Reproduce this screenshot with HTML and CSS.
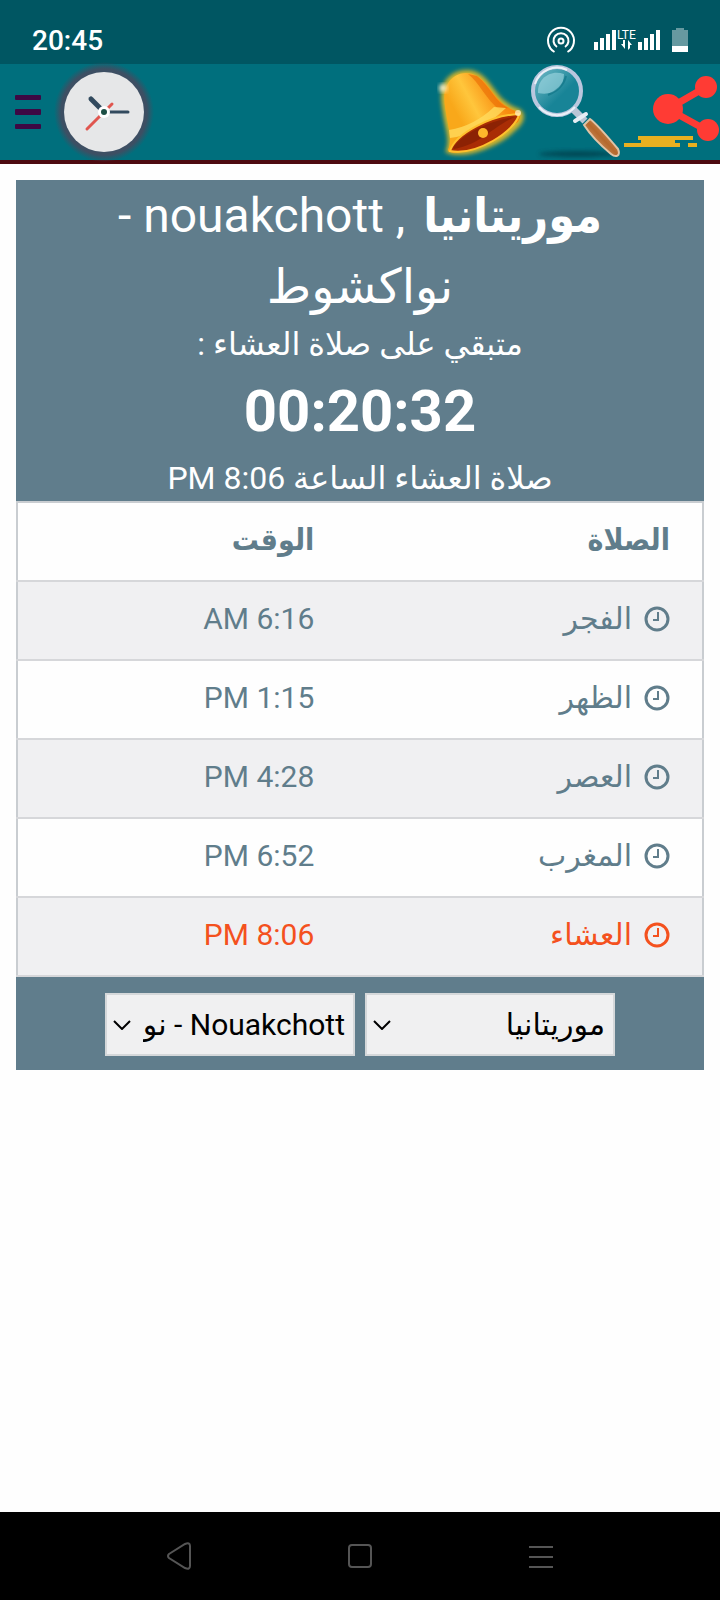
FILE: index.html
```html
<!DOCTYPE html>
<html lang="ar">
    <head>
        <meta charset="UTF-8" />
        <meta name="viewport" content="width=device-width, initial-scale=1.0" />
        <title>مواقيت الصلاة</title>
        <link rel="stylesheet" href="styles.css">
    </head>
    <body>
        <div class="status-bar">
            <span class="status-time">20:45</span>
            <svg class="status-icons" width="142" height="32" viewBox="0 0 142 32">
                <g fill="none" stroke="#fff" stroke-width="2">
                    <circle cx="15" cy="17" r="2.5" />
                    <path d="M11 23a7.5 7.5 0 1 1 8 0" />
                    <path d="M8.500 28a13 13 0 1 1 13 0" />
                </g>
                <g fill="#fff">
                    <path d="M48 18h4v8h-4zM54 14h4v12h-4zM60 10h4v16h-4zM66 6h4v20h-4z" />
                    <path d="M92 18h4v8h-4zM98 14h4v12h-4zM104 10h4v16h-4zM110 6h4v20h-4z" />
                    <path d="M79 16v9l-4-5h2v-4zM82 26v-10l4 5h-2v3z" />
                    <text class="lte" x="71" y="15">LTE</text>
                    <path d="M130 4h8v2h4v17h-16v-17h4z" opacity=".4" />
                    <path d="M126 22h16v6h-16z" />
                </g>
            </svg>
        </div>

        <header class="header">
            <button type="button" class="menu-button" aria-label="القائمة">
                <svg width="26" height="34" viewBox="0 0 26 34" fill="#3d0844">
                    <rect width="26" height="5" rx="1" />
                    <rect y="14" width="26" height="6" rx="1" />
                    <rect y="29" width="26" height="5" rx="1" />
                </svg>
            </button>
            <svg class="logo" width="96" height="96" viewBox="0 0 96 96">
                <defs>
                    <radialGradient id="ring">
                        <stop offset="0.86" stop-color="#3d4f63" />
                        <stop offset="1" stop-color="#3d4f63" stop-opacity="0" />
                    </radialGradient>
                </defs>
                <circle cx="48" cy="48" r="50" fill="url(#ring)" />
                <circle cx="48" cy="48" r="40" fill="#e6e7e8" />
                <g stroke-linecap="round">
                    <path d="M56 40 31 65" stroke="#e0564f" stroke-width="3" />
                    <path d="M35 35 46 46" stroke="#324a5e" stroke-width="5" />
                    <path d="M50 48h22" stroke="#324a5e" stroke-width="3" />
                </g>
                <circle cx="48" cy="48" r="6" fill="#fff" />
                <circle cx="48" cy="48" r="3" fill="#1d4f45" />
            </svg>

            <nav class="tools">
                <button type="button" aria-label="التنبيهات">
                    <svg width="96" height="96" viewBox="0 0 96 96">
                        <defs>
                            <linearGradient id="bell" x1=".1" y1=".4" x2=".8" y2="0">
                                <stop offset="0" stop-color="#f9a81a" />
                                <stop offset=".3" stop-color="#ffc63c" />
                                <stop offset=".7" stop-color="#f98f12" />
                                <stop offset="1" stop-color="#f07c05" />
                            </linearGradient>
                            <filter id="glow" x="-20%" y="-20%" width="140%" height="140%">
                                <feGaussianBlur stdDeviation="2" />
                            </filter>
                        </defs>
                        <path d="M16 87C20 77 16 66 14 55 12 42 9 30 14 20 20 8 36 5 46 11 61 20 63 40 87 47 92 51 90 58 83 64 69 79 36 94 16 87Z" fill="#d6b52c" stroke="#d6b52c" stroke-width="4" filter="url(#glow)" />
                        <path d="M16 86C20 76 17 66 15 55 13 42 10 31 15 21 21 9 35 6 45 12 60 21 63 41 87 48Q90 51 86 58L30 88Q17 90 16 86Z" fill="url(#bell)" />
                        <path d="M36 10C48 19 54 36 68 46L76 44C63 38 58 22 45 12Z" fill="#ea6b05" opacity=".6" />
                        <path d="M17 66Q42 62 62 43L74 44Q44 72 18 74Z" fill="#ffdb5c" opacity=".8" />
                        <path d="M18 87C24 69 60 51 87 50 84 67 44 92 18 87Z" fill="#a92d05" stroke="#ffc12e" stroke-width="2" />
                        <path d="M21 84C30 69 62 55 83 53 62 61 50 80 22 85Z" fill="#7a1b03" opacity=".6" />
                        <circle cx="51" cy="69" r="5" fill="#ffb72b" />
                        <circle cx="11" cy="24" r="4" fill="#fff4cf" opacity=".9" filter="url(#glow)" />
                        <circle cx="86" cy="49" r="3" fill="#fff4cf" opacity=".7" />
                    </svg>
                </button>
                <button type="button" aria-label="بحث">
                    <svg width="96" height="96" viewBox="0 0 96 96">
                        <defs>
                            <linearGradient id="wood" x1="0" y1="1" x2="1" y2="0">
                                <stop offset="0" stop-color="#e7c7a4" />
                                <stop offset=".5" stop-color="#b4682d" />
                                <stop offset="1" stop-color="#dcae82" />
                            </linearGradient>
                            <linearGradient id="lens" x1="0" y1="0" x2="1" y2="1">
                                <stop offset="0" stop-color="#75bcc9" />
                                <stop offset=".6" stop-color="#188497" />
                            </linearGradient>
                            <filter id="soft" x="-20%" y="-60%" width="140%" height="220%">
                                <feGaussianBlur stdDeviation="2" />
                            </filter>
                        </defs>
                        <ellipse cx="50" cy="90" rx="39" ry="3" fill="#023b47" opacity=".75" filter="url(#soft)" />
                        <path d="M46 46 57 57" stroke="#b8c6d6" stroke-width="7" />
                        <path d="M47 57 58 50" stroke="#e5edf4" stroke-width="4" stroke-linecap="round" />
                        <path d="M56 61 62 55Q69 60 90 85C93 92 88 94 83 90Q65 75 56 61Z" fill="url(#wood)" stroke="#dfc3a6" stroke-width="2" />
                        <circle cx="29" cy="27" r="23" fill="url(#lens)" />
                        <path d="M10 29C9 15 22 5 36 10 36 25 24 32 10 29Z" fill="#a5dbe4" opacity=".6" />
                        <path d="M20 31Q35 25 38 12" fill="none" stroke="#0c7183" stroke-width="2" opacity=".6" />
                        <circle cx="29" cy="27" r="24" fill="none" stroke="#bac7de" stroke-width="4" />
                        <path d="M7 20A23 23 0 0 1 39 6M11 43A24 24 0 0 0 47 43" fill="none" stroke="#eaf1f8" stroke-width="2" />
                    </svg>
                </button>
                <button type="button" aria-label="مشاركة">
                    <svg width="96" height="96" viewBox="0 0 96 96">
                        <path d="M14 72h55v4H51v3h5v4H0v-4h17v-3h-3zM64 79h9v4h-9z" fill="#e8b020" />
                        <path d="M82 23 44 45 84 67" fill="none" stroke="#ff3b34" stroke-width="7" />
                        <g fill="#ff3b34">
                            <circle cx="44" cy="45" r="15" />
                            <circle cx="82" cy="23" r="11" />
                            <circle cx="84" cy="66" r="11" />
                        </g>
                    </svg>
                </button>
            </nav>
        </header>

        <main class="content" dir="rtl">
            <section class="next-prayer">
                <h1><strong>موريتانيا</strong> , nouakchott - نواكشوط</h1>
                <p>متبقي على صلاة العشاء :</p>
                <div class="countdown">00:20:32</div>
                <p>صلاة العشاء الساعة 8:06 PM</p>
            </section>

            <table class="times">
                <thead>
                    <tr>
                        <th>الصلاة</th>
                        <th>الوقت</th>
                    </tr>
                </thead>
                <tbody>
                    <tr>
                        <td><svg class="clock" viewBox="0 0 26 26"><circle cx="13" cy="13" r="11" /><path d="M14 6v8H9" /></svg>الفجر</td>
                        <td>6:16 AM</td>
                    </tr>
                    <tr>
                        <td><svg class="clock" viewBox="0 0 26 26"><circle cx="13" cy="13" r="11" /><path d="M14 6v8H9" /></svg>الظهر</td>
                        <td>1:15 PM</td>
                    </tr>
                    <tr>
                        <td><svg class="clock" viewBox="0 0 26 26"><circle cx="13" cy="13" r="11" /><path d="M14 6v8H9" /></svg>العصر</td>
                        <td>4:28 PM</td>
                    </tr>
                    <tr>
                        <td><svg class="clock" viewBox="0 0 26 26"><circle cx="13" cy="13" r="11" /><path d="M14 6v8H9" /></svg>المغرب</td>
                        <td>6:52 PM</td>
                    </tr>
                    <tr class="active">
                        <td><svg class="clock" viewBox="0 0 26 26"><circle cx="13" cy="13" r="11" /><path d="M14 6v8H9" /></svg>العشاء</td>
                        <td>8:06 PM</td>
                    </tr>
                </tbody>
            </table>

            <form class="location">
                <div class="select-box">
                    <select name="country" aria-label="الدولة">
                        <option>موريتانيا</option>
                    </select>
                    <svg class="arrow" width="18" height="10" viewBox="0 0 18 10"><path d="M1 1l8 8 8-8" /></svg>
                </div>
                <div class="select-box">
                    <select name="city" aria-label="المدينة">
                        <option>Nouakchott - نواكشوط</option>
                    </select>
                    <svg class="arrow" width="18" height="10" viewBox="0 0 18 10"><path d="M1 1l8 8 8-8" /></svg>
                </div>
            </form>
        </main>

        <div class="system-nav">
            <button type="button" aria-label="رجوع">
                <svg width="24" height="28" viewBox="0 0 24 28"><path d="M2 12 18 2Q23 0 23 4V24Q23 28 18 26L2 16Q0 14 2 12Z" /></svg>
            </button>
            <button type="button" aria-label="الرئيسية">
                <svg width="24" height="24" viewBox="0 0 24 24"><rect x="1" y="1" width="22" height="22" rx="3" /></svg>
            </button>
            <button type="button" aria-label="التطبيقات">
                <svg width="24" height="24" viewBox="0 0 24 24"><path d="M0 3h24M0 13h24M0 23h24" /></svg>
            </button>
        </div>
    </body>
</html>
```

FILE: styles.css
```css
* {
    box-sizing: border-box;
}

body {
    display: flex;
    flex-direction: column;
    min-height: 100vh;
    margin: 0;
    font-family: Roboto, "DejaVu Sans", sans-serif;
    font-size: 30px;
    background: #fefefe;
}

button {
    display: flex;
    padding: 0;
    border: 0;
    background: none;
}

.status-bar {
    display: flex;
    justify-content: space-between;
    align-items: center;
    height: 64px;
    padding: 16px 32px 0;
    background: #005662;
    color: #fff;
}

.status-time {
    font-size: 28px;
    font-weight: 500;
}

.lte {
    font-size: 12px;
}

.header {
    display: flex;
    align-items: center;
    height: 100px;
    padding-left: 15px;
    background: #006f7d;
    border-bottom: 4px solid #4d0a10;
}

.logo {
    margin-left: 15px;
    overflow: visible;
}

.tools {
    display: flex;
    margin-left: auto;
}

.content {
    flex: 1;
    padding: 16px;
}

.next-prayer {
    background: #607d8c;
    color: #fff;
    text-align: center;
}

.next-prayer h1 {
    margin: 0;
    padding: 0 80px;
    font-size: 48px;
    font-weight: 400;
    line-height: 71px;
}

.next-prayer strong {
    margin-left: 6px;
}

.next-prayer strong,
.times th {
    font-family: "DejaVu Sans Condensed", "DejaVu Sans", sans-serif;
}

.next-prayer p {
    margin: 0;
    font-size: 32px;
    line-height: 45px;
}

.countdown {
    font-size: 58px;
    font-weight: 700;
    line-height: 89px;
}

.times {
    width: 100%;
    table-layout: fixed;
    border: 2px solid #c9cdd1;
    border-collapse: collapse;
    color: #607d8b;
}

.times th,
.times td {
    width: 48%;
    height: 79px;
    padding: 0 32px 4px;
    border-bottom: 2px solid #d6d7da;
    text-align: right;
}

.times th:first-child {
    width: 52%;
}

.times tbody tr:nth-child(odd) {
    background: #f0f0f2;
}

.times .active {
    color: #f4511e;
}

.clock {
    width: 26px;
    height: 26px;
    margin-left: 12px;
    vertical-align: -3px;
    fill: none;
    stroke: currentColor;
    stroke-width: 3;
}

.clock path {
    stroke-width: 2;
}

.location {
    display: flex;
    justify-content: center;
    gap: 10px;
    padding: 16px 16px 14px;
    background: #607d8c;
}

.select-box {
    position: relative;
    flex: 0 1 250px;
}

.select-box select {
    width: 100%;
    height: 63px;
    padding: 0 8px 0 36px;
    border: 2px solid #d5d8da;
    border-radius: 0;
    background: #f0f0f1;
    color: #000;
    font-family: inherit;
    font-size: 30px;
    appearance: none;
}

.arrow {
    position: absolute;
    left: 8px;
    top: 27px;
    fill: none;
    stroke: #000;
    stroke-width: 2;
    pointer-events: none;
}

.system-nav {
    display: flex;
    justify-content: center;
    align-items: center;
    gap: 157px;
    height: 88px;
    background: #000;
}

.system-nav svg {
    fill: none;
    stroke: #555;
    stroke-width: 2;
}
```
